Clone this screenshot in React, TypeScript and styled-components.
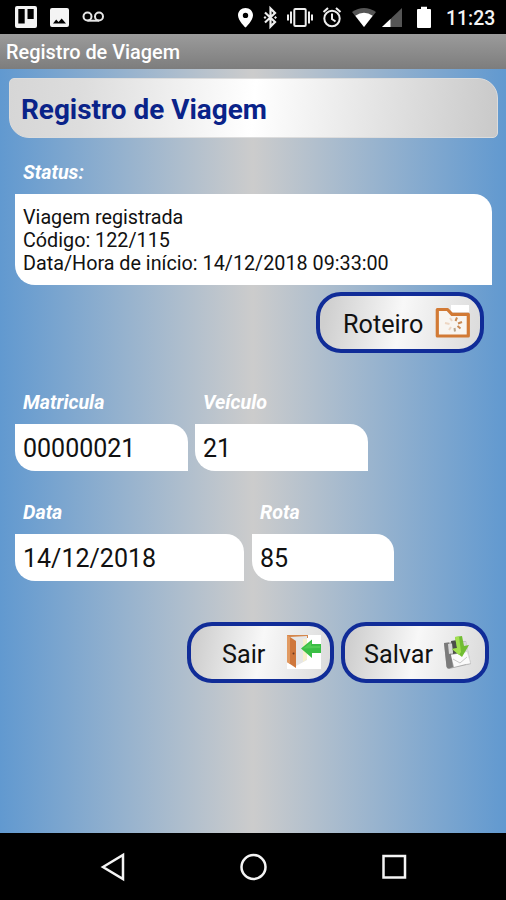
import React from "react";
import styled, { createGlobalStyle } from "styled-components";

const GlobalStyle = createGlobalStyle`
  * { box-sizing: border-box; }
  body { margin: 0; background: #000; font-family: Roboto, "Liberation Sans", sans-serif; }
`;

const Screen = styled.div`
  width: 506px;
  height: 900px;
  display: flex;
  flex-direction: column;
  overflow: hidden;
`;

const StatusBar = styled.header`
  height: 34px;
  flex: none;
  display: flex;
  align-items: center;
  justify-content: space-between;
  padding: 0 10px 0 14px;
  background: #000;
  color: #f4f4f4;
`;

const IconStrip = styled.div`
  display: flex;
  align-items: center;
  svg { display: block; }
`;

const Clock = styled.span`
  width: 50px;
  margin-left: 14px;
  font-size: 19.4px;
  font-weight: 500;
  line-height: 34px;
  padding-top: 3px;
  white-space: nowrap;
`;

const TitleBar = styled.div`
  height: 35px;
  flex: none;
  padding-left: 6px;
  background: linear-gradient(#9b9b9b, #7d7d7d);
  color: #fff;
  font-size: 19.9px;
  font-weight: 500;
  line-height: 37px;
`;

const Content = styled.main`
  flex: 1;
  padding: 9px 8px 0 9px;
  background: linear-gradient(90deg, #6199d0 0%, #cccccc 50%, #6199d0 100%);
`;

const Heading = styled.h1`
  margin: 0;
  height: 60px;
  padding-left: 11px;
  border-radius: 5px 20px 5px 20px;
  border: 1px solid #dcdcdc;
  background: linear-gradient(95deg, #d6d6d6 0%, #dddddd 15%, #ffffff 50%, #c9c9c9 100%);
  color: #0a2389;
  font-size: 27.9px;
  font-weight: 700;
  line-height: 61px;
`;

const Form = styled.form`
  display: flex;
  flex-direction: column;
  padding: 20px 6px 0;
`;

const FieldRow = styled.div<{ $top: number; $gap: number }>`
  display: flex;
  gap: ${(p) => p.$gap}px;
  margin-top: ${(p) => p.$top}px;
`;

const Field = styled.div<{ $width: number }>`
  width: ${(p) => p.$width}px;
`;

const Label = styled.div`
  height: 36px;
  padding-left: 8px;
  color: #fff;
  font-size: 19.7px;
  font-weight: 700;
  font-style: italic;
  line-height: 30px;
`;

const Value = styled.div`
  height: 47px;
  padding-left: 8px;
  border-radius: 0 18px 0 20px;
  background: #fff;
  color: #111;
  font-size: 25px;
  line-height: 49px;
  white-space: nowrap;
`;

const Message = styled(Value)`
  height: 91px;
  padding-top: 12px;
  font-size: 19.75px;
  line-height: 23px;
`;

const Actions = styled.div<{ $top: number; $right: number }>`
  display: flex;
  justify-content: flex-end;
  gap: 7px;
  margin-top: ${(p) => p.$top}px;
  padding-right: ${(p) => p.$right}px;
`;

const ActionButton = styled.button<{ $width: number; $start: number; $gap: number }>`
  width: ${(p) => p.$width}px;
  height: 61px;
  display: flex;
  align-items: center;
  gap: ${(p) => p.$gap}px;
  padding: 3px 0 0 ${(p) => p.$start}px;
  border: 4px solid #102c98;
  border-radius: 25px;
  background: linear-gradient(100deg, #cfcfcf 5%, #f8f8f8 50%, #dadada 100%);
  color: #111;
  font: 400 25.2px Roboto, "Liberation Sans", sans-serif;
  white-space: nowrap;
  svg { flex: none; display: block; margin-top: -4px; }
`;

const NavBar = styled.nav`
  height: 67px;
  flex: none;
  display: grid;
  grid-template-columns: 182px 143px 181px;
  background: #000;
  svg { display: block; }
`;

const NavSlot = styled.div<{ $start: number }>`
  display: flex;
  align-items: center;
  padding-left: ${(p) => p.$start}px;
`;

const NotificationIcons = () => (
  <svg width="92" height="34" viewBox="14 0 92 34" fill="none">
    <path fillRule="evenodd" fill="#f4f4f4" d="M17 6h18q2 0 2 2v18q0 2-2 2H17q-2 0-2-2V8q0-2 2-2Zm1.300 3v14.500h6.400V9Zm9.200 0v10h6.200V9Z" />
    <path fillRule="evenodd" fill="#f4f4f4" d="M52 8h15q2 0 2 2v15q0 2-2 2H52q-2 0-2-2V10q0-2 2-2Zm1 15.500h13l-4.300-5-3.200 3.500-2.300-2.500Z" />
    <g stroke="#e6e6e6" strokeWidth="2">
      <circle cx="87.500" cy="16.500" r="4" />
      <circle cx="99" cy="16.500" r="4" />
      <path d="M87.500 20.700H99" />
    </g>
  </svg>
);

const SystemIcons = () => (
  <svg width="196" height="34" viewBox="236 0 196 34" fill="none">
    <path fillRule="evenodd" fill="#fff" d="M245.500 8c-4.300 0-7.500 3.200-7.500 7.200 0 5.400 7.500 12.300 7.500 12.300s7.500-6.900 7.500-12.300c0-4-3.200-7.200-7.500-7.200Zm0 4.700a2.700 2.700 0 1 1 0 5.400 2.700 2.700 0 0 1 0-5.400Z" />
    <path stroke="#eee" strokeWidth="2.200" d="m265 12.500 10 9.500-4.500 4.500v-18L275 13l-10 9.500" />
    <path fill="#eee" d="m263.500 17.500 1.500-1.500 1.500 1.500-1.500 1.500Zm10.500 0 1.500-1.500 1.500 1.500-1.500 1.500Z" />
    <g stroke="#eee" strokeWidth="2">
      <rect x="294.300" y="9" width="11.400" height="17" rx="1" />
      <path d="M291 11.500v12M288 14.500v6M309 11.500v12M312 14.500v6" />
      <circle cx="332" cy="18.500" r="7.700" />
      <path d="M332 13.500v5.500l3.500 2.500M323.500 12l4.500-4M340.500 12 336 8" />
    </g>
    <path fill="#555" d="M352 12q12-8 24 0l-12 15Z" />
    <path fill="#fff" d="M355.300 15.700q8.700-5.800 17.400 0L364 27Z" />
    <path fill="#555" d="M402 8v19h-20Z" />
    <path fill="#fff" d="M390.500 19v8H382Z" />
    <path fill="#fff" d="M421 6.800h6v2.200h3q1 0 1 1v17q0 1-1 1h-12q-1 0-1-1V10q0-1 1-1h3Z" />
  </svg>
);

const FolderIcon = () => (
  <svg width="36" height="36" viewBox="0 0 36 36" fill="none">
    <path fill="#fff" d="M16 1h18v7H16Z" />
    <path fill="#f8f5f1" stroke="#d27a35" strokeWidth="3.200" strokeLinejoin="round" d="M2.300 5.500h10.200l4.500 4.800h16.300V32H2.300Z" />
    <g strokeWidth="2">
      <path stroke="#c98a55" d="m20.500 17 1.500-3.500M23 19.500l4-1.500M22.500 22l3 2.500" />
      <path stroke="#b9a78f" d="m19.500 24 .5 3.500" />
      <path stroke="#edd6c3" d="m16 23-2 3M14.500 20 10 19M17 17l-2-3" />
    </g>
  </svg>
);

const ExitIcon = () => (
  <svg width="36" height="36" viewBox="0 0 36 36">
    <path fill="#fff" d="M1 1h34v34H1Z" />
    <path fill="#d5874c" d="M1 1h21v3H1Z" />
    <path fill="#e6e6e6" d="m4 3 17-1v24L10 32Z" />
    <path fill="#f7efcb" d="M17 5h4v20l-4 3Z" />
    <path fill="#cf773c" d="m1 1 9 6v27l-9-6Z" />
    <path fill="#e19a62" d="m1 1 3 2v27l-3-2Z" />
    <circle cx="7.500" cy="19.500" r="1" fill="#6d3920" />
    <path fill="#3abf45" d="m15 14.500 11-9V10h9v9h-9v5Z" />
    <path fill="#50cc54" d="m17 14.500 8-6V12h9v2Z" />
  </svg>
);

const SaveIcon = () => (
  <svg width="32" height="36" viewBox="2 -2 32 36">
    <path fill="#aaa" d="m3 7 22-2 5 23-22 5q-2 0-2.500-2Z" />
    <path fill="#7a7a7a" d="m3 7 5-.5L12 31l-4 1.500q-2 0-2.500-2Z" />
    <path fill="#d9d9d9" d="m20 6 5-.5 5 22-5 1Z" />
    <path fill="#4c4f4a" d="m10 5 6-1 2 13-6 1Z" />
    <path fill="#d8d8d8" d="m7 8 4-.5L12 17l-4 1Z" />
    <path fill="#fafafa" d="m10 19 16-3 3 11-16 4Z" />
    <path stroke="#c7c7c7" fill="none" d="m12 23 7 4 7-6" />
    <path fill="#71bd32" d="m14 1 7-1 2 10 5-1-7 12-10-8 5-1Z" />
    <path fill="#a2df50" d="m14 1 4-.500 2 15.500-2 3-7-6 5-1Z" />
  </svg>
);

export default function App() {
  return (
    <>
      <GlobalStyle />
      <Screen>
        <StatusBar>
          <IconStrip><NotificationIcons /></IconStrip>
          <IconStrip><SystemIcons /><Clock>11:23</Clock></IconStrip>
        </StatusBar>
        <TitleBar>Registro de Viagem</TitleBar>
        <Content>
          <Heading>Registro de Viagem</Heading>
          <Form onSubmit={(e) => e.preventDefault()}>
            <Label>Status:</Label>
            <Message>
              Viagem registrada<br />
              Código: 122/115<br />
              Data/Hora de início: 14/12/2018 09:33:00
            </Message>
            <Actions $top={7} $right={8}>
              <ActionButton type="button" $width={168} $start={23} $gap={12}>Roteiro<FolderIcon /></ActionButton>
            </Actions>
            <FieldRow $top={35} $gap={7}>
              <Field $width={173}><Label>Matricula</Label><Value>00000021</Value></Field>
              <Field $width={173}><Label>Veículo</Label><Value>21</Value></Field>
            </FieldRow>
            <FieldRow $top={27} $gap={8}>
              <Field $width={229}><Label>Data</Label><Value>14/12/2018</Value></Field>
              <Field $width={142}><Label>Rota</Label><Value>85</Value></Field>
            </FieldRow>
            <Actions $top={41} $right={3}>
              <ActionButton type="button" $width={147} $start={31} $gap={21}>Sair<ExitIcon /></ActionButton>
              <ActionButton type="submit" $width={148} $start={19} $gap={10}>Salvar<SaveIcon /></ActionButton>
            </Actions>
          </Form>
        </Content>
        <NavBar>
          <NavSlot $start={100}>
            <svg width="27" height="30" viewBox="0 0 27 30"><path fill="none" stroke="#f4f4f4" strokeWidth="2.500" d="m3 15 20-12v24Z" /></svg>
          </NavSlot>
          <NavSlot $start={57}>
            <svg width="30" height="30" viewBox="0 0 30 30"><circle cx="14.500" cy="15" r="12" fill="none" stroke="#f4f4f4" strokeWidth="2.500" /></svg>
          </NavSlot>
          <NavSlot $start={55}>
            <svg width="30" height="30" viewBox="0 0 30 30"><rect x="3.500" y="4" width="21.500" height="21.500" fill="none" stroke="#f4f4f4" strokeWidth="2.500" /></svg>
          </NavSlot>
        </NavBar>
      </Screen>
    </>
  );
}
